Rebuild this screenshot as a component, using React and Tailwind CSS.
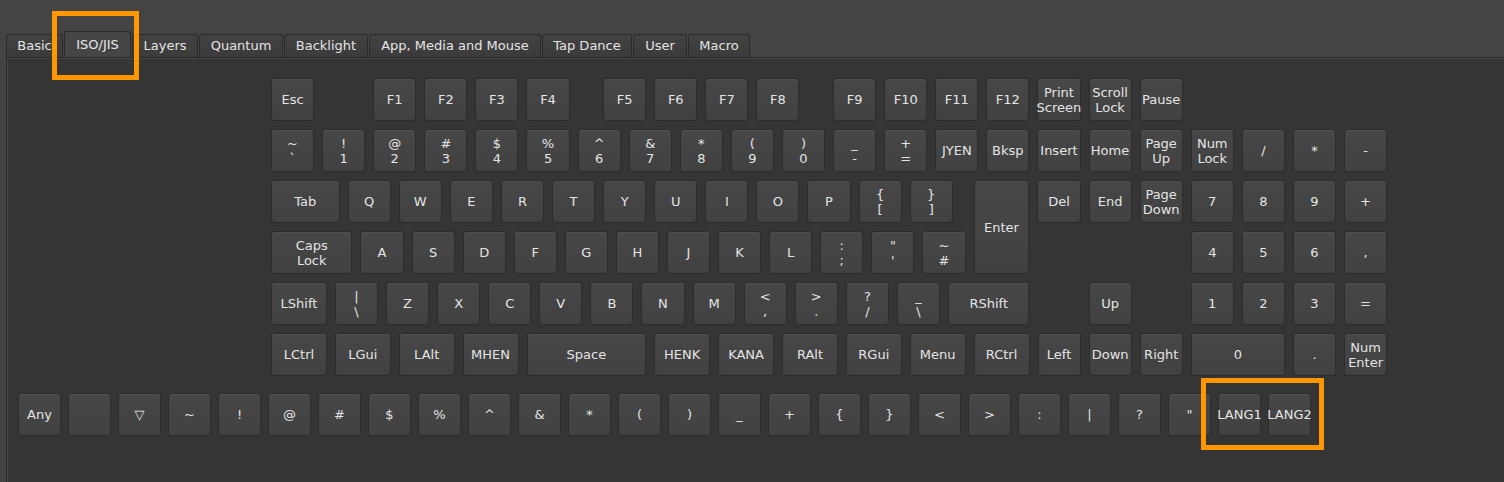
import React from "react";

const W = {
  1: "w-[43.1px]",
  1.25: "w-[55.875px]",
  1.5: "w-[68.65px]",
  1.75: "w-[81.425px]",
  2: "w-[94.2px]",
  2.5: "w-[119.75px]",
};
const S = {
  0.25: "w-[12.775px]",
  0.5: "w-[25.55px]",
  1: "w-[51.1px]",
  4.25: "w-[217.175px]",
};

const rows = [
  [["Esc"], { s: 1 }, ["F1"], ["F2"], ["F3"], ["F4"], { s: 0.5 }, ["F5"], ["F6"], ["F7"], ["F8"], { s: 0.5 }, ["F9"], ["F10"], ["F11"], ["F12"], ["Print\nScreen"], ["Scroll\nLock"], ["Pause"]],
  [["~\n`"], ["!\n1"], ["@\n2"], ["#\n3"], ["$\n4"], ["%\n5"], ["^\n6"], ["&\n7"], ["*\n8"], ["(\n9"], [")\n0"], ["_\n-"], ["+\n="], ["JYEN"], ["Bksp"], ["Insert"], ["Home"], ["Page\nUp"], ["Num\nLock"], ["/"], ["*"], ["-"]],
  [["Tab", 1.5], ["Q"], ["W"], ["E"], ["R"], ["T"], ["Y"], ["U"], ["I"], ["O"], ["P"], ["{\n["], ["}\n]"], { s: 0.25 }, ["Enter", 1.25, true], ["Del"], ["End"], ["Page\nDown"], ["7"], ["8"], ["9"], ["+"]],
  [["Caps\nLock", 1.75], ["A"], ["S"], ["D"], ["F"], ["G"], ["H"], ["J"], ["K"], ["L"], [":\n;"], ["\"\n'"], ["~\n#"], { s: 4.25 }, ["4"], ["5"], ["6"], [","]],
  [["LShift", 1.25], ["|\n\\"], ["Z"], ["X"], ["C"], ["V"], ["B"], ["N"], ["M"], ["<\n,"], [">\n."], ["?\n/"], ["_\n\\"], ["RShift", 1.75], { s: 1 }, ["Up"], { s: 1 }, ["1"], ["2"], ["3"], ["="]],
  [["LCtrl", 1.25], ["LGui", 1.25], ["LAlt", 1.25], ["MHEN", 1.25], ["Space", 2.5], ["HENK", 1.25], ["KANA", 1.25], ["RAlt", 1.25], ["RGui", 1.25], ["Menu", 1.25], ["RCtrl", 1.25], ["Left"], ["Down"], ["Right"], ["0", 2], ["."], ["Num\nEnter"]],
];

const bottom = ["Any", "", "▽", "~", "!", "@", "#", "$", "%", "^", "&", "*", "(", ")", "_", "+", "{", "}", "<", ">", ":", "|", "?", "\"", "LANG1", "LANG2"];

const keyCls =
  "shrink-0 flex flex-col items-center justify-center rounded-[3px] border border-[#2c2c2c] bg-gradient-to-b from-[#474747] to-[#414141] shadow-[inset_0_1px_0_rgba(255,255,255,0.05)] text-[#e4e4e4] text-[13px] leading-[15px] whitespace-nowrap";

function Label({ text }) {
  return text.split("\n").map((t, i) => <span key={i}>{t}</span>);
}

const tabs = [
  ["Basic", "w-[57px]"],
  ["ISO/JIS", "w-[67px]"],
  ["Layers", "w-[66px]"],
  ["Quantum", "w-[84px]"],
  ["Backlight", "w-[84px]"],
  ["App, Media and Mouse", "w-[172px]"],
  ["Tap Dance", "w-[90px]"],
  ["User", "w-[54px]"],
  ["Macro", "w-[62px]"],
];

export default function App() {
  return (
    <div
      className="relative w-[1504px] h-[482px] overflow-hidden bg-[#444444] flex flex-col"
      style={{ fontFamily: '"DejaVu Sans", "Liberation Sans", sans-serif' }}
    >
      <div className="flex items-end gap-[1px] pl-[6px] pt-[31px] h-[57px]">
        {tabs.map(([t, w]) =>
          t === "ISO/JIS" ? (
            <div
              key={t}
              className={"h-[26px] flex items-center justify-center rounded-t-[3px] border border-b-0 border-[#2b2b2b] bg-[#454545] text-[13px] text-[#e8e8e8] whitespace-nowrap " + w}
            >
              {t}
            </div>
          ) : (
            <div
              key={t}
              className={"h-[23px] flex items-center justify-center rounded-t-[3px] border border-b-0 border-[#2b2b2b] bg-gradient-to-b from-[#424242] to-[#3b3b3b] text-[13px] text-[#e4e4e4] whitespace-nowrap " + w}
            >
              {t}
            </div>
          )
        )}
      </div>
      <div className="flex-1 ml-[6px] border-t border-l border-[#2a2a2a] bg-[#353535] shadow-[inset_1px_1px_0_#474747]">
        <div className="ml-[264px] pt-[20px] flex flex-col gap-[8px]">
          {rows.map((row, ri) => (
            <div key={ri} className="flex items-start h-[43px]">
              {row.map((k, ki) =>
                k.s ? (
                  <div key={ki} className={"shrink-0 " + S[k.s]} />
                ) : (
                  <div
                    key={ki}
                    className={keyCls + " mr-[8px] " + W[k[1] || 1] + (k[2] ? " h-[94px]" : " h-[43px]")}
                  >
                    <Label text={k[0]} />
                  </div>
                )
              )}
            </div>
          ))}
        </div>
        <div className="flex gap-[7px] pl-[11px] mt-[17px]">
          {bottom.map((b, i) => (
            <div key={i} className={keyCls + " w-[43px] h-[43px]"}>
              {b}
            </div>
          ))}
        </div>
      </div>

      <div className="absolute left-[52px] top-[11px] w-[87px] h-[69px] border-[5px] border-[#ff9800]" />
      <div className="absolute left-[1201px] top-[378px] w-[123px] h-[72px] border-[5px] border-[#ff9800]" />
    </div>
  );
}
